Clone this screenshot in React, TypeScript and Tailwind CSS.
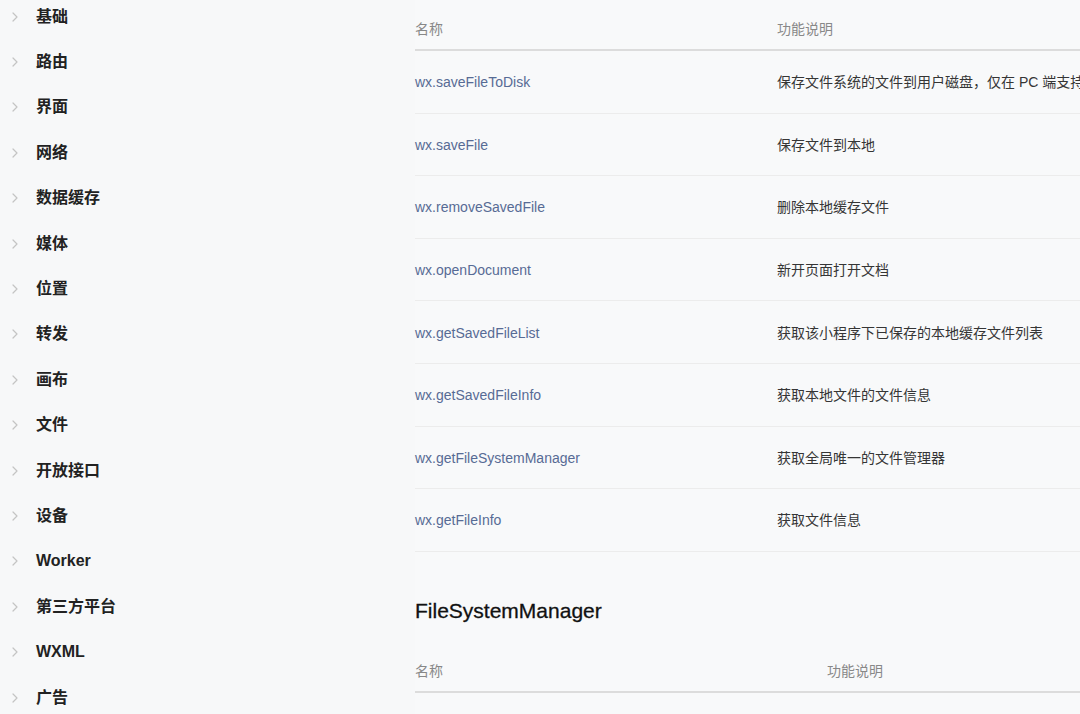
import React from "react";

const nav = ["基础", "路由", "界面", "网络", "数据缓存", "媒体", "位置", "转发", "画布", "文件", "开放接口", "设备", "Worker", "第三方平台", "WXML", "广告"];

const rows: [string, string][] = [
  ["wx.saveFileToDisk", "保存文件系统的文件到用户磁盘，仅在 PC 端支持"],
  ["wx.saveFile", "保存文件到本地"],
  ["wx.removeSavedFile", "删除本地缓存文件"],
  ["wx.openDocument", "新开页面打开文档"],
  ["wx.getSavedFileList", "获取该小程序下已保存的本地缓存文件列表"],
  ["wx.getSavedFileInfo", "获取本地文件的文件信息"],
  ["wx.getFileSystemManager", "获取全局唯一的文件管理器"],
  ["wx.getFileInfo", "获取文件信息"],
];

const font = { fontFamily: '"Liberation Sans", "Noto Sans CJK SC", sans-serif' };

function Chevron() {
  return (
    <svg width="6" height="10" viewBox="0 0 6 10" className="shrink-0">
      <path d="M1 1l4 4-4 4" fill="none" stroke="#c4c4c4" strokeWidth="1.2" strokeLinecap="round" strokeLinejoin="round" />
    </svg>
  );
}

export default function App() {
  return (
    <div className="w-[1080px] h-[714px] overflow-hidden bg-[#f8f9fa] flex" style={font}>
      <aside className="w-[415px] shrink-0 bg-[#f7f8f9]">
        <ul className="-mt-[6px] pl-[12px]">
          {nav.map((n) => (
            <li key={n} className="h-[45.4px] flex items-center gap-[18px]">
              <Chevron />
              <span className="text-[16px] font-bold text-[#222]">{n}</span>
            </li>
          ))}
        </ul>
      </aside>
      <main className="flex-1 min-w-0">
        <div className="w-[900px]">
          <div className="flex h-[51px] border-b-2 border-[#dcdcdc] text-[14px] text-[#888] pt-[19px]">
            <div className="w-[362px] shrink-0">名称</div>
            <div>功能说明</div>
          </div>
          {rows.map(([a, b]) => (
            <div key={a} className="flex items-center h-[62.6px] border-b border-[#ececec] text-[14px] whitespace-nowrap pt-[2px]">
              <div className="w-[362px] shrink-0 text-[#576b95]">{a}</div>
              <div className="text-[#353535]">{b}</div>
            </div>
          ))}
          <h2 className="text-[21px] text-[#111] pt-[43px] h-[104px]" style={{ WebkitTextStroke: "0.3px #111" }}>FileSystemManager</h2>
          <div className="flex h-[37px] border-b-2 border-[#dcdcdc] text-[14px] text-[#888] pt-[5px]">
            <div className="w-[412px] shrink-0">名称</div>
            <div>功能说明</div>
          </div>
        </div>
      </main>
    </div>
  );
}
